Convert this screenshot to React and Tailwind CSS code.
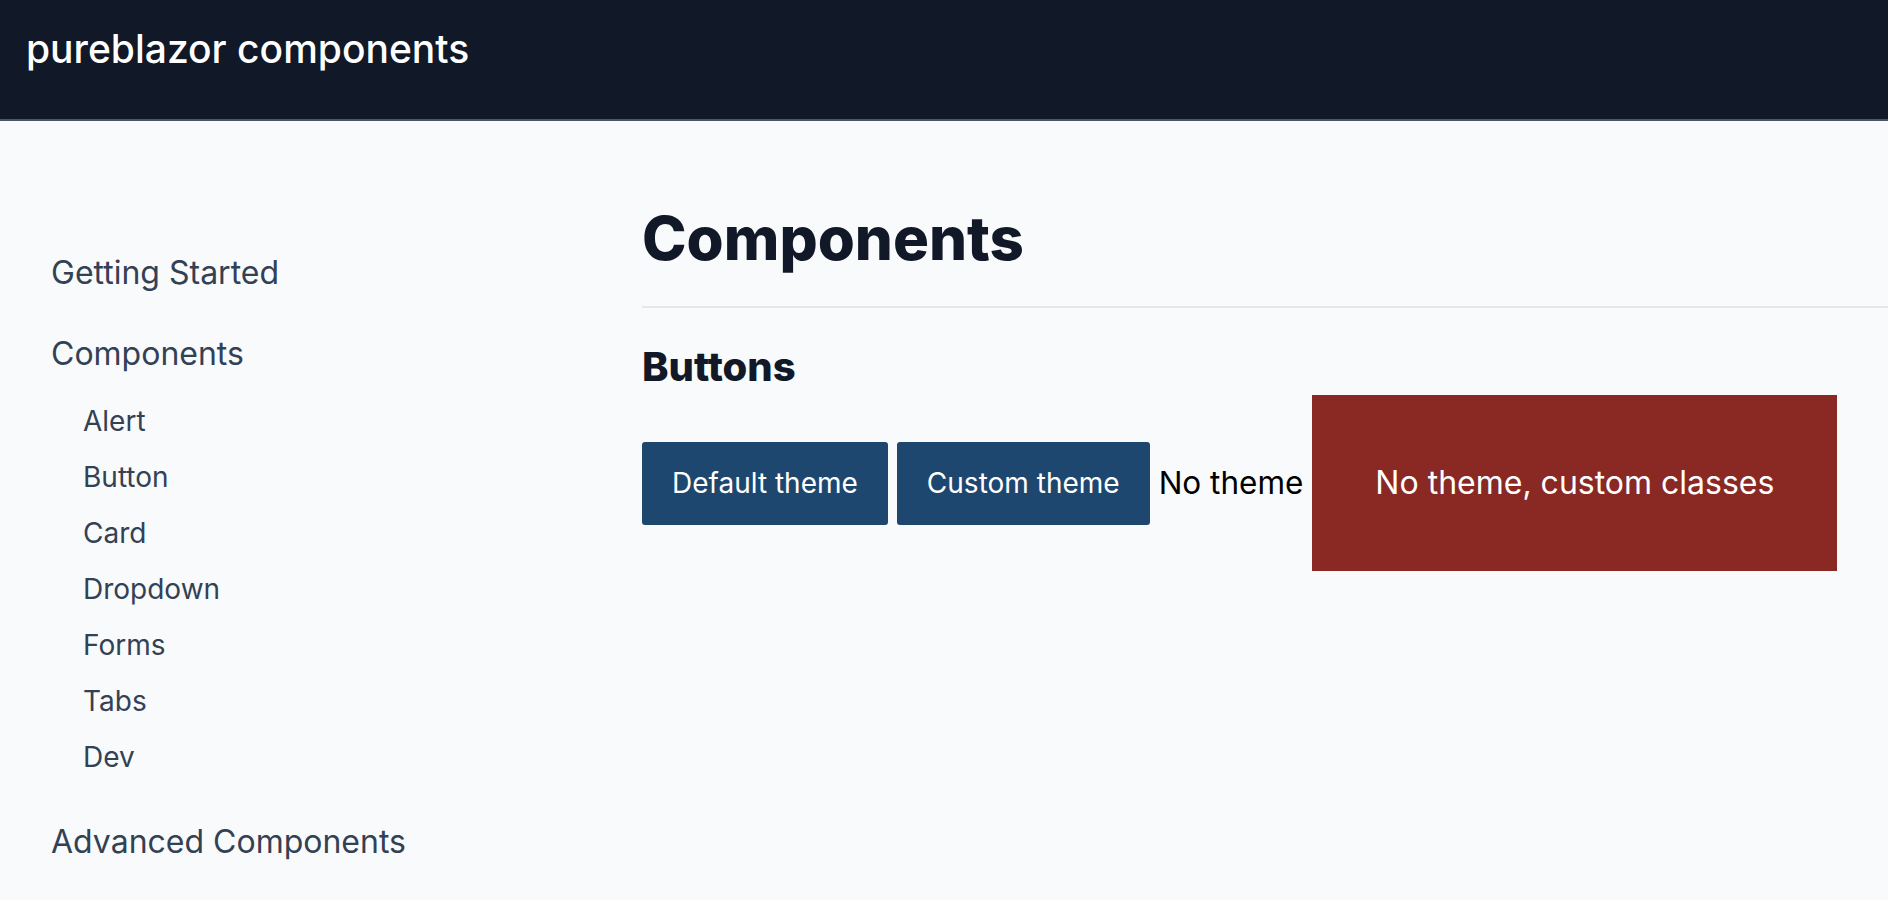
const NAV = [
  { title: 'Getting Started' },
  {
    title: 'Components',
    items: ['Alert', 'Button', 'Card', 'Dropdown', 'Forms', 'Tabs', 'Dev'],
  },
  { title: 'Advanced Components' },
]

export default function App() {
  return (
    <div className="min-h-screen bg-[#f9fafb] font-['Inter',sans-serif]">
      {/* TOP BAR */}
      <header className="h-[121px] bg-[#111827] border-b-2 border-[#4b5563] flex items-center px-[26px] pb-[22px]">
        <span className="text-white text-[39px] font-medium leading-[48px]">pureblazor components</span>
      </header>

      <div className="flex">
        {/* SIDEBAR */}
        <nav className="w-[642px] shrink-0 pl-[51px] pt-[128px]">
          <ul className="flex flex-col gap-[33px]">
            {NAV.map(group => (
              <li key={group.title}>
                <a className="block text-[32px] leading-[48px] text-[#334155]">{group.title}</a>
                {group.items && (
                  <ul className="mt-[15px] pl-[32px]">
                    {group.items.map(item => (
                      <li key={item}>
                        <a className="block text-[28px] leading-[56px] text-[#334155]">{item}</a>
                      </li>
                    ))}
                  </ul>
                )}
              </li>
            ))}
          </ul>
        </nav>

        {/* MAIN */}
        <main className="flex-1 pt-[81px]">
          <h1 className="text-[60px] leading-[72px] font-extrabold text-[#111827] pb-[32px] border-b-2 border-[#e5e7eb]">
            Components
          </h1>
          <h2 className="mt-[31px] text-[40px] leading-[56px] font-extrabold text-[#111827]">Buttons</h2>

          <div className="flex items-center gap-[9px]">
            <button className="bg-[#1e476f] text-white text-[28px] leading-[41px] px-[30px] py-[21px] rounded-[3px]">
              Default theme
            </button>
            <button className="bg-[#1e476f] text-white text-[28px] leading-[41px] px-[30px] py-[21px] rounded-[3px]">
              Custom theme
            </button>
            <button className="text-black text-[31.5px] leading-[48px]">No theme</button>
            <button className="bg-[#8a2823] text-white text-[32px] leading-[48px] px-[63px] py-[64px]">
              No theme, custom classes
            </button>
          </div>
        </main>
      </div>
    </div>
  )
}
